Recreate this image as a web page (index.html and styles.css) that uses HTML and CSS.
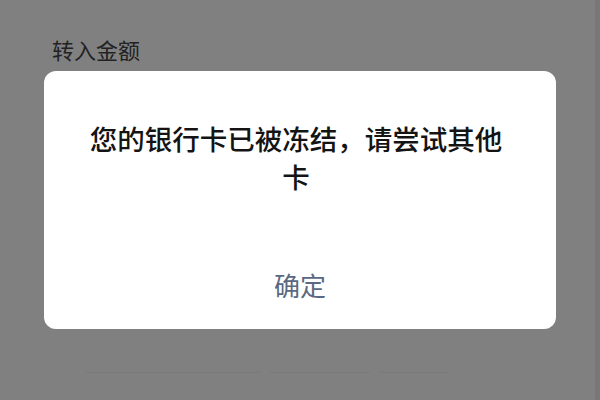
FILE: index.html
```html
<!DOCTYPE html>
<html lang="zh-CN">
<head>
<meta charset="utf-8">
<link rel="stylesheet" href="styles.css">
</head>
<body>
<div class="screen">
  <div class="main">
    <div class="label">转入金额</div>
    <div class="dialog">
      <div class="message">您的银行卡已被冻结，请尝试其他卡</div>
      <div class="action">确定</div>
    </div>
    <div class="ghost">
      <span class="g1"></span>
      <span class="g2"></span>
      <span class="g3"></span>
    </div>
  </div>
  <div class="edge"></div>
</div>
</body>
</html>
```
FILE: styles.css
```css
html, body {
  margin: 0;
  padding: 0;
  width: 600px;
  height: 400px;
  overflow: hidden;
  background: #808080;
  font-family: "Noto Sans CJK SC", "Noto Sans", sans-serif;
}
.screen {
  display: flex;
  width: 600px;
  height: 400px;
}
.main {
  flex: 1;
  display: flex;
  flex-direction: column;
  padding-left: 44px;
}
.edge {
  width: 5px;
  background: #787878;
}
.label {
  margin-top: 34px;
  margin-left: 8px;
  height: 37px;
  font-size: 22px;
  line-height: 30px;
  color: #222222;
}
.dialog {
  width: 512px;
  height: 258px;
  background: #ffffff;
  border-radius: 12px;
  display: flex;
  flex-direction: column;
}
.message {
  height: 123px;
  padding: 48px 47px 0 39px;
  font-size: 27.5px;
  line-height: 38px;
  font-weight: 500;
  color: #141414;
  text-align: center;
}
.action {
  flex: 1;
  display: flex;
  align-items: center;
  justify-content: center;
  font-size: 26px;
  color: #5a6882;
  padding-bottom: 2px;
}
.ghost {
  display: flex;
  align-items: flex-end;
  gap: 10px;
  margin-top: 32px;
  margin-left: 42px;
  height: 12px;
}
.ghost span {
  display: block;
  height: 1px;
  background: #7a7a7a;
}
.g1 { width: 174px; }
.g2 { width: 100px; }
.g3 { width: 68px; }
```
